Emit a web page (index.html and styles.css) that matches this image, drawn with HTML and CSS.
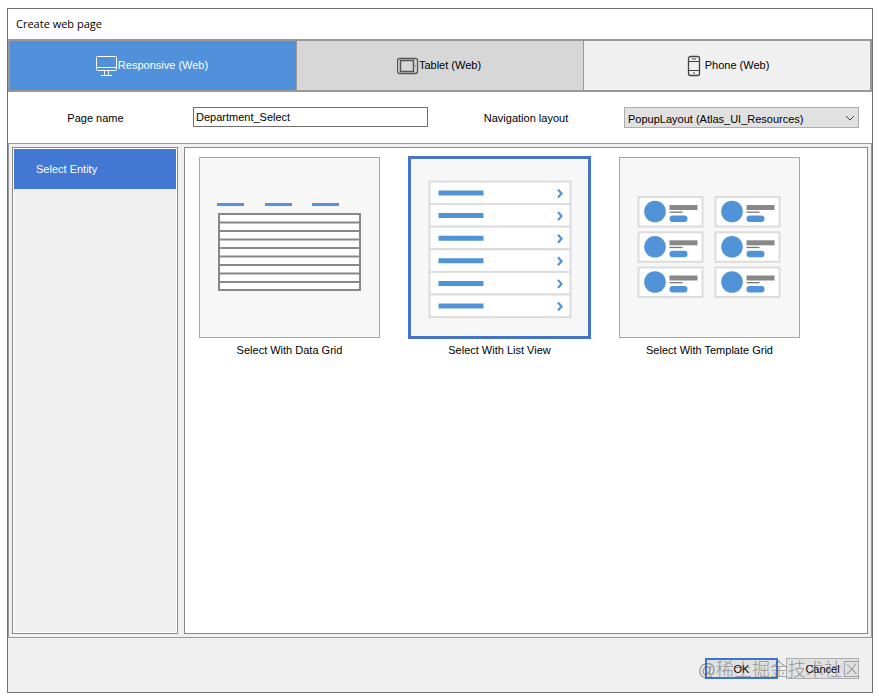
FILE: index.html
```html
<!DOCTYPE html>
<html lang="en">
<head>
	<meta charset="utf-8">
	<meta name="viewport" content="width=device-width, initial-scale=1.0">
	<title>Create web page</title>
	<link rel="stylesheet" href="styles.css">
</head>
<body>
	<form class="dialog">
		<h1 class="title">Create web page</h1>

		<div class="tabs">
			<button type="button" class="tab active">
				<svg class="icon" viewBox="0 0 22 22" fill="none" stroke="currentColor">
					<rect x="0.5" y="1.5" width="20" height="14" rx="1"/>
					<path d="M1 12.5h19M8.5 16v4M12.5 16v4M5 20.5h11"/>
				</svg>
				<span>Responsive (Web)</span>
			</button>
			<button type="button" class="tab hover">
				<svg class="icon" viewBox="0 0 22 22" fill="none" stroke="#555">
					<rect x="0.5" y="3.5" width="20" height="15" rx="2" stroke-width="1.3"/>
					<rect x="3.5" y="5.5" width="13" height="11" stroke-width="1.5"/>
					<path d="M18 11h1"/>
				</svg>
				<span>Tablet (Web)</span>
			</button>
			<button type="button" class="tab">
				<svg class="icon" viewBox="0 0 22 22" fill="none" stroke="#444">
					<rect x="5.5" y="1.5" width="11" height="19" rx="2" stroke-width="1.3"/>
					<path d="M6 6.5h10M6 15.5h10M9 4h4M11 17v2"/>
				</svg>
				<span>Phone (Web)</span>
			</button>
		</div>

		<div class="fields">
			<label for="pageName">Page name</label>
			<input type="text" id="pageName" value="Department_Select">
			<label for="layout">Navigation layout</label>
			<div class="select">
				<select id="layout">
					<option>PopupLayout (Atlas_UI_Resources)</option>
				</select>
				<svg class="arrow" viewBox="0 0 10 6" fill="none" stroke="#444"><path d="M1 1l4 4 4-4"/></svg>
			</div>
		</div>

		<div class="content">
			<div class="sidebar">
				<button type="button" class="category">Select Entity</button>
			</div>

			<div class="templates">
				<button type="button" class="template">
					<svg class="preview" viewBox="0 0 181 181">
						<path d="M18 47.5h27M66 47.5h27M113 47.5h27" stroke="#5193d7" stroke-width="3"/>
						<rect x="20" y="57" width="141" height="76" fill="#fff" stroke="#888" stroke-width="2"/>
						<path d="M20 65.5h141M20 74h141M20 82.5h141M20 91h141M20 99.5h141M20 108h141M20 116.5h141M20 125h141" stroke="#888" stroke-width="2"/>
					</svg>
					<span>Select With Data Grid</span>
				</button>

				<button type="button" class="template selected">
					<svg class="preview" viewBox="0 0 181 181">
						<defs>
							<g id="row">
								<rect width="141" height="22.6" fill="#fff" stroke="#dcdcdc" stroke-width="2"/>
								<path d="M9 11.5h45" stroke="#5193d7" stroke-width="5"/>
								<path d="M128.5 8l3.5 4-3.5 4" fill="none" stroke="#5193d7" stroke-width="2.2"/>
							</g>
						</defs>
						<use href="#row" x="20.5" y="24.5"/>
						<use href="#row" x="20.5" y="47.1"/>
						<use href="#row" x="20.5" y="69.7"/>
						<use href="#row" x="20.5" y="92.3"/>
						<use href="#row" x="20.5" y="114.9"/>
						<use href="#row" x="20.5" y="137.5"/>
					</svg>
					<span>Select With List View</span>
				</button>

				<button type="button" class="template">
					<svg class="preview" viewBox="0 0 181 181">
						<defs>
							<g id="card">
								<rect x="1" y="1" width="64" height="29.5" fill="#fff" stroke="#dcdcdc" stroke-width="2"/>
								<circle cx="17.5" cy="15.5" r="10.8" fill="#5193d7"/>
								<rect x="32" y="9" width="28" height="5" fill="#888"/>
								<rect x="32" y="15.5" width="13" height="1.3" fill="#777"/>
								<rect x="32" y="19.5" width="18" height="6.5" rx="3.2" fill="#5193d7"/>
							</g>
						</defs>
						<use href="#card" x="18.5" y="39"/>
						<use href="#card" x="95.5" y="39"/>
						<use href="#card" x="18.5" y="74.3"/>
						<use href="#card" x="95.5" y="74.3"/>
						<use href="#card" x="18.5" y="109.5"/>
						<use href="#card" x="95.5" y="109.5"/>
					</svg>
					<span>Select With Template Grid</span>
				</button>
			</div>
		</div>

		<div class="footer">
			<button type="submit" class="action primary">OK</button>
			<button type="button" class="action">Cancel</button>
			<span class="watermark">@稀土掘金技术社区</span>
		</div>
	</form>
</body>
</html>
```
FILE: styles.css
```css
* {
	box-sizing: border-box;
}

body {
	display: flex;
	min-height: 100vh;
	margin: 0;
	padding: 8px 6px 7px 7px;
	background-color: white;
	font-family: "Liberation Sans", Arial, sans-serif;
	font-size: 11px;
	color: black;
}

button, input, select {
	margin: 0;
	font: inherit;
	color: inherit;
}

.dialog {
	display: flex;
	flex: 1;
	flex-direction: column;
	border: 1px solid #6e6e6e;
	background-color: #f0f0f0;
}

.title {
	margin: 0;
	padding: 0 8px;
	background-color: white;
	font-family: "Open Sans", sans-serif;
	font-size: 11px;
	font-weight: normal;
	line-height: 30px;
}

.tabs {
	display: grid;
	grid-template-columns: repeat(3, 1fr);
	gap: 1px;
	height: 53px;
	border: 2px solid #999;
	background-color: #999;
}

.tab {
	display: flex;
	align-items: center;
	justify-content: center;
	padding: 0 2px 0 0;
	border: 0;
	background-color: #f0f0f0;
}

.tab.hover {
	background-color: #d7d7d7;
}

.tab.active {
	background-color: #5191db;
	color: white;
}

.tab span {
	padding-bottom: 2px;
}

.icon {
	width: 22px;
	height: 22px;
}

.fields {
	display: grid;
	grid-template-columns: 175px 1fr 176px 1fr;
	gap: 10px;
	align-items: start;
	height: 52px;
	padding: 15px 13px 0 0;
	border-bottom: 1px solid #999;
	background-color: white;
	line-height: 22px;
	text-align: center;
}

.fields input {
	width: 100%;
	height: 20px;
	padding: 0 2px;
	border: 1px solid #707070;
}

.select {
	position: relative;
}

.select select {
	display: block;
	width: 100%;
	height: 21px;
	padding: 0 3px;
	border: 1px solid #adadad;
	border-radius: 0;
	background-color: #e1e1e1;
	appearance: none;
}

.arrow {
	position: absolute;
	top: 8px;
	right: 4px;
	width: 10px;
	height: 6px;
	pointer-events: none;
}

.content {
	display: grid;
	flex: 1;
	grid-template-columns: 166px 1fr;
	gap: 6px;
	padding: 3px;
	border: 1px solid #999;
	border-top: 0;
}

.sidebar {
	padding: 1px;
	border: 1px solid #888;
	box-shadow: inset 0 0 0 1px white;
}

.category {
	width: 100%;
	height: 40px;
	padding: 0 22px;
	border: 0;
	background-color: #4278d3;
	color: white;
	text-align: left;
}

.templates {
	display: flex;
	flex-wrap: wrap;
	align-content: flex-start;
	gap: 29px;
	padding: 9px 14px;
	border: 1px solid #888;
	background-color: white;
}

.template {
	padding: 0;
	border: 0;
	background: none;
	line-height: 24px;
}

.preview {
	display: block;
	width: 181px;
	height: 181px;
	background-color: #f7f7f7;
	outline: 1px solid #a6a6a6;
	outline-offset: -1px;
}

.selected .preview {
	outline: 3px solid #4574c8;
	outline-offset: -2px;
}

.footer {
	position: relative;
	display: flex;
	justify-content: flex-end;
	gap: 8px;
	padding: 20px 13px 13px;
}

.action {
	width: 73px;
	height: 21px;
	padding: 0;
	border: 1px solid #adadad;
	background-color: #e1e1e1;
}

.action.primary {
	border: 2px solid #3c74d0;
}

/* stamp over the buttons */
.watermark {
	position: absolute;
	right: 12px;
	bottom: 10px;
	color: rgba(90, 90, 90, 0.6);
	font-family: "Liberation Sans", "Noto Sans CJK SC", sans-serif;
	font-size: 18px;
	font-weight: 300;
	line-height: 24px;
	pointer-events: none;
}
```
